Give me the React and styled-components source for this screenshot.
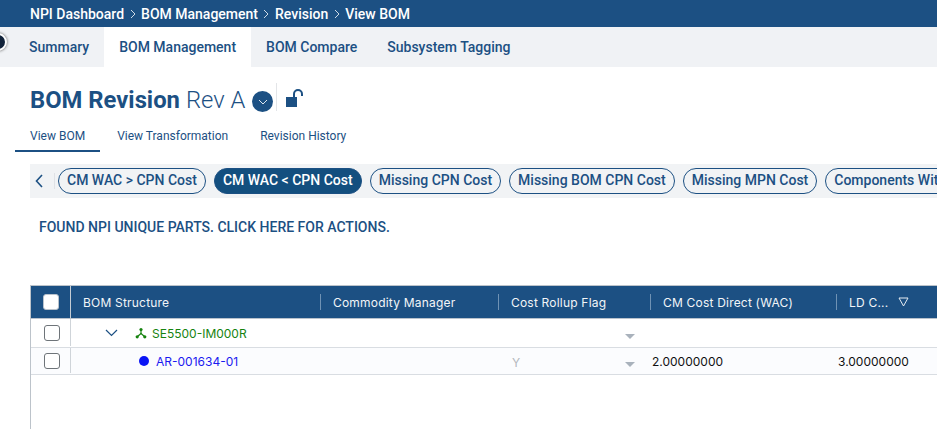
import React from "react";
import styled, { createGlobalStyle } from "styled-components";

const GlobalStyle = createGlobalStyle`
  html, body {
    margin: 0;
    padding: 0;
    height: 429px;
    overflow: hidden;
    background: #fff;
    font-family: Roboto, "Liberation Sans", sans-serif;
  }
`;

const navy = "#1c5083";
const columns = "40px 250px 178px 152px 186px 1fr";

const Page = styled.div`
  position: relative;
  width: 937px;
  height: 429px;
  overflow: hidden;
`;

const Breadcrumb = styled.div`
  display: flex;
  align-items: center;
  gap: 5.5px;
  height: 27px;
  padding-left: 30px;
  background: ${navy};
  color: #fff;
  font-size: 14px;
  font-weight: 500;
`;

const Crumb = styled.span`
  white-space: nowrap;
`;

const NavBar = styled.div`
  display: flex;
  height: 40px;
  padding-left: 14px;
  background: #f0f2f5;
`;

const NavTab = styled.div`
  display: flex;
  align-items: center;
  padding: 0 15px;
  color: ${navy};
  font-size: 14px;
  font-weight: 500;
  background: ${(p) => (p.$active ? "#fff" : "transparent")};
`;

const Handle = styled.div`
  position: absolute;
  left: -11px;
  top: 33px;
  width: 14px;
  height: 14px;
  border-radius: 50%;
  background: #12233a;
  border: 2px solid #fff;
  box-shadow: 0 0 3px #555;
`;

const TitleRow = styled.div`
  display: flex;
  align-items: center;
  height: 34px;
  margin-top: 16px;
  padding-left: 30px;
  color: ${navy};
`;

const Title = styled.h1`
  margin: 0;
  font-size: 23.8px;
  font-weight: 700;
  white-space: nowrap;
`;

const TitleRev = styled.span`
  margin-left: 6px;
  font-size: 23.8px;
  font-weight: 300;
  white-space: nowrap;
`;

const RoundButton = styled.div`
  display: flex;
  align-items: center;
  justify-content: center;
  width: 21px;
  height: 21px;
  margin-left: 7px;
  margin-top: 3px;
  border-radius: 50%;
  background: ${navy};
`;

const Divider = styled.div`
  width: 1px;
  height: 28px;
  margin-left: 3px;
  margin-bottom: 6px;
  background: #e3e5e8;
`;

const Lock = styled.svg`
  margin-left: 8px;
  margin-top: -2px;
`;

const SubTabs = styled.div`
  display: flex;
  height: 30px;
  margin-top: 5px;
  margin-left: 15px;
`;

const SubTab = styled.div`
  display: flex;
  align-items: center;
  box-sizing: border-box;
  padding: 0 15px 1px;
  margin-right: 2px;
  color: ${navy};
  font-size: 12px;
  white-space: nowrap;
  border-bottom: 2px solid ${(p) => (p.$active ? navy : "transparent")};
`;

const ChipBar = styled.div`
  display: flex;
  align-items: center;
  height: 34px;
  margin-top: 12px;
  margin-left: 30px;
  background: #f1f3f5;
  overflow: hidden;
`;

const ChipArrow = styled.div`
  display: flex;
  align-items: center;
  flex: none;
  width: 19px;
  height: 16px;
  padding-left: 5px;
  margin-right: 3px;
  border-right: 1px solid #dfe2e6;
`;

const Chip = styled.div`
  flex: none;
  box-sizing: border-box;
  height: 26px;
  line-height: 23px;
  padding: 0 8px;
  margin-right: 8px;
  border: 1px solid ${navy};
  border-radius: 13px;
  color: ${(p) => (p.$active ? "#fff" : navy)};
  background: ${(p) => (p.$active ? "#134f7f" : "transparent")};
  font-size: 14px;
  font-weight: 500;
  white-space: nowrap;
`;

const Notice = styled.div`
  margin-top: 21px;
  margin-left: 39px;
  color: ${navy};
  font-size: 14px;
  font-weight: 500;
  line-height: 16px;
`;

const Table = styled.div`
  margin-top: 50px;
  margin-left: 30px;
  height: 200px;
  border-left: 1px solid #bcc3ca;
  border-top: 1px solid #bcc3ca;
  font-family: Inter, Roboto, sans-serif;
  font-size: 12px;
`;

const HeadRow = styled.div`
  display: grid;
  grid-template-columns: ${columns};
  height: 32px;
  background: ${navy};
  border-bottom: 1px solid #b9c2cc;
  color: #f2f5f8;
  letter-spacing: 0.2px;
`;

const HeadCheck = styled.div`
  display: flex;
  align-items: center;
  justify-content: center;
  border-right: 1px solid #c4ccd4;
`;

const HeadCell = styled.div`
  position: relative;
  display: flex;
  align-items: center;
  gap: 10px;
  padding-left: 12px;
  white-space: nowrap;

  &:not(:last-child)::after {
    content: "";
    position: absolute;
    right: 0;
    top: 8px;
    height: 16px;
    width: 1px;
    background: #6f92b4;
  }
`;

const Row = styled.div`
  display: grid;
  grid-template-columns: ${columns};
  height: ${(p) => p.$height}px;
  box-sizing: border-box;
  background: ${(p) => p.$bg};
  border-bottom: 1px solid #d9dde2;
`;

const CheckCell = styled.div`
  display: flex;
  align-items: center;
  justify-content: center;
  box-shadow: inset -1px 0 0 #cfd4d9;
  margin-bottom: 1px;
`;

const Box = styled.div`
  box-sizing: border-box;
  width: 16px;
  height: 16px;
  margin-left: 1px;
  border-radius: 3px;
  border: 1px solid ${(p) => (p.$head ? "#b9c2cc" : "#6e7479")};
  background: #fff;
`;

const TreeCell = styled.div`
  display: flex;
  align-items: center;
  padding-left: ${(p) => p.$indent}px;
  color: ${(p) => p.$color};
  white-space: nowrap;
`;

const TreeIcon = styled.svg`
  margin: 0 5px 0 17px;
`;

const Dot = styled.span`
  width: 10px;
  height: 10px;
  margin-right: 7px;
  border-radius: 50%;
  background: #0a14f5;
`;

const FlagCell = styled.div`
  display: flex;
  align-items: center;
  justify-content: space-between;
  padding: 3px 16px 0 13px;
  color: #b3b8bd;
`;

const Caret = styled.span`
  margin-top: 3px;
  width: 0;
  height: 0;
  border-left: 5px solid transparent;
  border-right: 5px solid transparent;
  border-top: 5px solid #a9b2bc;
`;

const ValueCell = styled.div`
  display: flex;
  align-items: center;
  padding-left: ${(p) => p.$pad}px;
  color: #111;
  white-space: nowrap;
`;

const chips = [
  "CM WAC > CPN Cost",
  "CM WAC < CPN Cost",
  "Missing CPN Cost",
  "Missing BOM CPN Cost",
  "Missing MPN Cost",
  "Components With Cost",
];

const Sep = () => (
  <svg width="6" height="10" viewBox="0 0 6 10" fill="none">
    <path d="M1 1l4 4-4 4" stroke="#cfdbe7" strokeWidth="1" />
  </svg>
);

export default function App() {
  return (
    <Page>
      <GlobalStyle />
      <Breadcrumb>
        <Crumb>NPI Dashboard</Crumb>
        <Sep />
        <Crumb>BOM Management</Crumb>
        <Sep />
        <Crumb>Revision</Crumb>
        <Sep />
        <Crumb>View BOM</Crumb>
      </Breadcrumb>
      <NavBar>
        <NavTab>Summary</NavTab>
        <NavTab $active>BOM Management</NavTab>
        <NavTab>BOM Compare</NavTab>
        <NavTab>Subsystem Tagging</NavTab>
      </NavBar>
      <Handle />

      <TitleRow>
        <Title>BOM Revision</Title>
        <TitleRev>Rev A</TitleRev>
        <RoundButton>
          <svg width="10" height="6" viewBox="0 0 10 6" fill="none">
            <path d="M1 1l4 4 4-4" stroke="#dfe8f0" strokeWidth="1" />
          </svg>
        </RoundButton>
        <Divider />
        <Lock width="19" height="20" viewBox="0 0 19 20" fill="none">
          <rect x="1" y="8" width="11" height="10" fill={navy} />
          <path d="M9 8V5a4 4 0 0 1 8 0v2" stroke={navy} strokeWidth="2" />
        </Lock>
      </TitleRow>

      <SubTabs>
        <SubTab $active>View BOM</SubTab>
        <SubTab>View Transformation</SubTab>
        <SubTab>Revision History</SubTab>
      </SubTabs>

      <ChipBar>
        <ChipArrow>
          <svg width="8" height="14" viewBox="0 0 8 14" fill="none">
            <path d="M7 1L1.5 7 7 13" stroke={navy} strokeWidth="1.6" />
          </svg>
        </ChipArrow>
        {chips.map((c, i) => (
          <Chip key={c} $active={i === 1}>
            {c}
          </Chip>
        ))}
      </ChipBar>

      <Notice>FOUND NPI UNIQUE PARTS. CLICK HERE FOR ACTIONS.</Notice>

      <Table>
        <HeadRow>
          <HeadCheck>
            <Box $head />
          </HeadCheck>
          <HeadCell>BOM Structure</HeadCell>
          <HeadCell>Commodity Manager</HeadCell>
          <HeadCell>Cost Rollup Flag</HeadCell>
          <HeadCell>CM Cost Direct (WAC)</HeadCell>
          <HeadCell>
            LD C...
            <svg width="11" height="10" viewBox="0 0 11 10" fill="none">
              <path d="M1 1h9L5.5 9z" stroke="#e6ecf2" strokeWidth="1" />
            </svg>
          </HeadCell>
        </HeadRow>

        <Row $height={29} $bg="#fff">
          <CheckCell>
            <Box />
          </CheckCell>
          <TreeCell $indent={34} $color="#16830f">
            <svg width="13" height="8" viewBox="0 0 13 8" fill="none">
              <path d="M1 1l5.5 5.5L12 1" stroke={navy} strokeWidth="1.2" />
            </svg>
            <TreeIcon width="12" height="12" viewBox="0 0 12 12" fill="none">
              <path d="M6 3v3.5M6 6.5L2.5 9.5M6 6.5l3.5 3" stroke="#16830f" strokeWidth="1.2" />
              <circle cx="6" cy="2.5" r="1.6" fill="#16830f" />
              <circle cx="2.2" cy="9.8" r="1.6" fill="#16830f" />
              <circle cx="9.8" cy="9.8" r="1.6" fill="#16830f" />
            </TreeIcon>
            SE5500-IM000R
          </TreeCell>
          <div />
          <FlagCell>
            <span />
            <Caret />
          </FlagCell>
          <div />
          <div />
        </Row>

        <Row $height={27} $bg="#fbfcfe">
          <CheckCell>
            <Box />
          </CheckCell>
          <TreeCell $indent={68} $color="#1a1af0">
            <Dot />
            AR-001634-01
          </TreeCell>
          <div />
          <FlagCell>
            <span>Y</span>
            <Caret />
          </FlagCell>
          <ValueCell $pad={1}>2.00000000</ValueCell>
          <ValueCell $pad={1}>3.00000000</ValueCell>
        </Row>
      </Table>
    </Page>
  );
}
